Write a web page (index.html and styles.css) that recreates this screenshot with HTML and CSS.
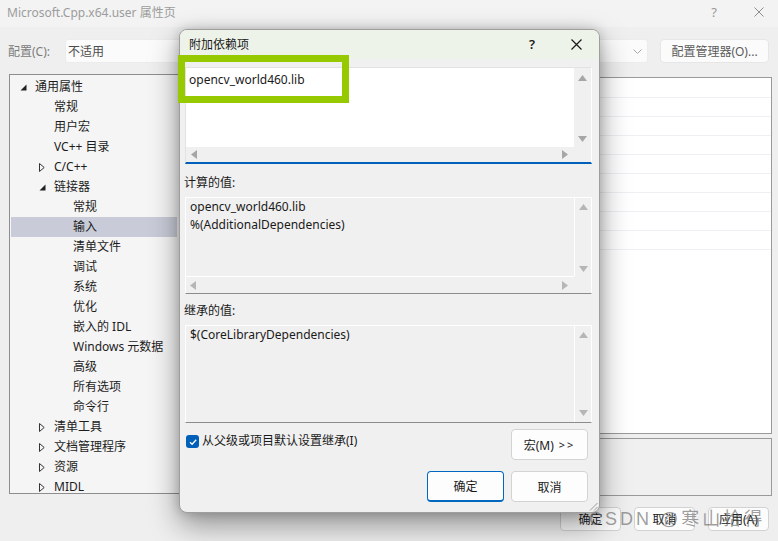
FILE: index.html
```html
<!DOCTYPE html>
<html>
<head>
<meta charset="utf-8">
<link rel="stylesheet" href="styles.css">
</head>
<body>
<div class="window">
  <div class="titlebar">
    <span class="title">Microsoft.Cpp.x64.user 属性页</span>
    <div class="caption-btns">
      <span class="cap help">?</span>
      <span class="cap"><svg width="10" height="10" viewBox="0 0 10 10"><path d="M0.5 0.5L9.5 9.5M9.5 0.5L0.5 9.5" stroke="#8c8c8c" stroke-width="1"/></svg></span>
    </div>
  </div>

  <div class="config-row">
    <span class="cfg-label">配置(C):</span>
    <div class="select">
      <span>不适用</span>
      <svg class="chev" width="9" height="5" viewBox="0 0 9 5"><path d="M0.5 0.5L4.5 4.5L8.5 0.5" fill="none" stroke="#a8a8a8" stroke-width="1"/></svg>
    </div>
    <div class="cfg-btn">配置管理器(O)...</div>
  </div>

  <div class="content">
    <div class="tree">
      <div class="item l0"><span class="arr"><svg width="7" height="7" viewBox="0 0 7 7"><polygon points="6.5,0.5 6.5,6.5 0.5,6.5" fill="#222"/></svg></span>通用属性</div>
      <div class="item l1"><span class="arr"></span>常规</div>
      <div class="item l1"><span class="arr"></span>用户宏</div>
      <div class="item l1"><span class="arr"></span>VC++ 目录</div>
      <div class="item l1"><span class="arr"><svg width="6" height="9" viewBox="0 0 6 9"><polygon points="0.5,0.5 5.2,4.5 0.5,8.5" fill="none" stroke="#333" stroke-width="1"/></svg></span>C/C++</div>
      <div class="item l1"><span class="arr"><svg width="7" height="7" viewBox="0 0 7 7"><polygon points="6.5,0.5 6.5,6.5 0.5,6.5" fill="#222"/></svg></span>链接器</div>
      <div class="item l2"><span class="arr"></span>常规</div>
      <div class="item l2 sel"><span class="arr"></span>输入</div>
      <div class="item l2"><span class="arr"></span>清单文件</div>
      <div class="item l2"><span class="arr"></span>调试</div>
      <div class="item l2"><span class="arr"></span>系统</div>
      <div class="item l2"><span class="arr"></span>优化</div>
      <div class="item l2"><span class="arr"></span>嵌入的 IDL</div>
      <div class="item l2"><span class="arr"></span>Windows 元数据</div>
      <div class="item l2"><span class="arr"></span>高级</div>
      <div class="item l2"><span class="arr"></span>所有选项</div>
      <div class="item l2"><span class="arr"></span>命令行</div>
      <div class="item l1"><span class="arr"><svg width="6" height="9" viewBox="0 0 6 9"><polygon points="0.5,0.5 5.2,4.5 0.5,8.5" fill="none" stroke="#333" stroke-width="1"/></svg></span>清单工具</div>
      <div class="item l1"><span class="arr"><svg width="6" height="9" viewBox="0 0 6 9"><polygon points="0.5,0.5 5.2,4.5 0.5,8.5" fill="none" stroke="#333" stroke-width="1"/></svg></span>文档管理程序</div>
      <div class="item l1"><span class="arr"><svg width="6" height="9" viewBox="0 0 6 9"><polygon points="0.5,0.5 5.2,4.5 0.5,8.5" fill="none" stroke="#333" stroke-width="1"/></svg></span>资源</div>
      <div class="item l1"><span class="arr"><svg width="6" height="9" viewBox="0 0 6 9"><polygon points="0.5,0.5 5.2,4.5 0.5,8.5" fill="none" stroke="#333" stroke-width="1"/></svg></span>MIDL</div>
    </div>
    <div class="rightcol">
      <div class="grid">
        <div class="row"></div><div class="row"></div><div class="row"></div>
        <div class="row"></div><div class="row"></div><div class="row"></div>
        <div class="row"></div><div class="row"></div><div class="row"></div>
      </div>
      <div class="desc"></div>
    </div>
  </div>

  <div class="footer">
    <div class="mbtn">确定</div>
    <div class="mbtn">取消</div>
    <div class="mbtn">应用(A)</div>
  </div>
</div>

<div class="dialog">
  <div class="dlg-title">
    <span class="dlg-name">附加依赖项</span>
    <span class="dlg-help">?</span>
    <span class="dlg-close"><svg width="11" height="11" viewBox="0 0 11 11"><path d="M0.5 0.5L10.5 10.5M10.5 0.5L0.5 10.5" stroke="#1a1a1a" stroke-width="1.2"/></svg></span>
  </div>
  <div class="dlg-body">
    <div class="edit">
      <div class="edit-text">opencv_world460.lib</div>
      <div class="vscroll">
        <svg width="9" height="6" viewBox="0 0 9 6"><polygon points="0,6 4.5,0 9,6" fill="#a6a6a6"/></svg>
        <svg width="9" height="6" viewBox="0 0 9 6"><polygon points="0,0 4.5,6 9,0" fill="#a6a6a6"/></svg>
      </div>
      <div class="hscroll">
        <svg width="6" height="9" viewBox="0 0 6 9"><polygon points="6,0 0,4.5 6,9" fill="#a6a6a6"/></svg>
        <svg width="6" height="9" viewBox="0 0 6 9"><polygon points="0,0 6,4.5 0,9" fill="#a6a6a6"/></svg>
      </div>
      <div class="corner"></div>
    </div>

    <div class="label">计算的值:</div>
    <div class="ro ro-h">
      <div class="ro-text">opencv_world460.lib<br>%(AdditionalDependencies)</div>
      <div class="vscroll ro-v">
        <svg width="9" height="6" viewBox="0 0 9 6"><polygon points="0,6 4.5,0 9,6" fill="#b6b6b6"/></svg>
        <svg width="9" height="6" viewBox="0 0 9 6"><polygon points="0,0 4.5,6 9,0" fill="#b6b6b6"/></svg>
      </div>
      <div class="hscroll ro-hs">
        <svg width="6" height="9" viewBox="0 0 6 9"><polygon points="6,0 0,4.5 6,9" fill="#b6b6b6"/></svg>
        <svg width="6" height="9" viewBox="0 0 6 9"><polygon points="0,0 6,4.5 0,9" fill="#b6b6b6"/></svg>
      </div>
      <div class="corner"></div>
    </div>

    <div class="label label2">继承的值:</div>
    <div class="ro ro-nh">
      <div class="ro-text">$(CoreLibraryDependencies)</div>
      <div class="vscroll ro-v ro-v2">
        <svg width="9" height="6" viewBox="0 0 9 6"><polygon points="0,6 4.5,0 9,6" fill="#b6b6b6"/></svg>
        <svg width="9" height="6" viewBox="0 0 9 6"><polygon points="0,0 4.5,6 9,0" fill="#b6b6b6"/></svg>
      </div>
    </div>

    <div class="check-row">
      <span class="checkbox"><svg width="10" height="10" viewBox="0 0 10 10"><path d="M2 5.2L4.1 7.3L8.2 2.8" fill="none" stroke="#fff" stroke-width="1.3"/></svg></span>
      <span class="check-label">从父级或项目默认设置继承(I)</span>
      <div class="dbtn macro">宏(M) <span class="gt">&gt;&gt;</span></div>
    </div>

    <div class="btn-row">
      <div class="dbtn primary">确定</div>
      <div class="dbtn">取消</div>
    </div>
  </div>
  <svg class="grip" width="9" height="9" viewBox="0 0 9 9"><path d="M8.5 1L1 8.5M8.5 5L5 8.5" stroke="#9a9a9a" stroke-width="1"/></svg>
</div>

<div class="highlight"></div>
<div class="watermark">CSDN @寒山拾得</div>
</body>
</html>
```

FILE: styles.css
```css
* { box-sizing: border-box; }
html, body { margin: 0; padding: 0; }
body {
  width: 778px;
  height: 541px;
  overflow: hidden;
  position: relative;
  background: #efefef;
  font-family: "Noto Sans", "Noto Sans CJK SC", sans-serif;
  font-size: 12px;
  color: #1a1a1a;
}

.window { display: flex; flex-direction: column; height: 541px; }

.titlebar {
  height: 27px;
  display: flex;
  align-items: center;
  background: #f3f3f3;
  padding-left: 7px;
  color: #9c9c9c;
}
.titlebar .title { flex: 1; line-height: 18px; padding-bottom: 2px; }
.caption-btns { display: flex; gap: 25px; padding-right: 9px; align-items: center; padding-bottom: 3px; }
.cap { width: 20px; display: flex; justify-content: center; align-items: center; color: #999; font-size: 13px; line-height: 14px; }

.config-row {
  display: flex;
  align-items: center;
  height: 24px;
  margin-top: 12px;
  padding-left: 8px;
  padding-right: 9px;
}
.cfg-label { width: 57px; color: #7c7c7c; }
.select {
  width: 583px;
  height: 24px;
  background: #fbfbfb;
  border: 1px solid #ececec;
  border-radius: 3px;
  display: flex;
  align-items: center;
  padding-left: 2px;
  color: #4c4c4c;
}
.select .chev { margin-left: auto; margin-right: 5px; }
.cfg-btn {
  margin-left: 12px;
  width: 109px;
  height: 24px;
  background: #fbfbfb;
  border: 1px solid #e6e6e6;
  border-radius: 4px;
  display: flex;
  align-items: center;
  justify-content: center;
  color: #5c5c5c;
}

.content {
  display: flex;
  align-items: flex-start;
  margin-top: 11px;
  padding-left: 9px;
  padding-right: 6px;
}
.tree {
  width: 171px;
  height: 420px;
  border: 1px solid #8e8e8e;
  background: #f5f5f5;
  padding-top: 2px;
}
.item {
  height: 20px;
  display: flex;
  align-items: center;
  margin: 0 2px 0 1px;
  color: #1c1c1c;
  white-space: nowrap;
  line-height: 20px;
}
.item.l0 { padding-left: 9px; }
.item.l1 { padding-left: 28px; }
.item.l2 { padding-left: 47px; }
.item.sel { background: #c9ccd8; }
.arr { width: 15px; height: 20px; display: flex; align-items: center; flex-shrink: 0; }

.rightcol { flex: 1; margin-left: 16px; display: flex; flex-direction: column; }
.grid {
  margin-top: 3px;
  height: 357px;
  border: 1px solid #9a9a9a;
  background: #ffffff;
  padding-top: 1px;
}
.row { height: 19px; border-bottom: 1px solid #eef0f4; }
.desc {
  margin-top: 4px;
  height: 58px;
  border: 1px solid #9a9a9a;
  background: #f0f0f0;
}

.footer {
  display: flex;
  justify-content: flex-end;
  gap: 13px;
  padding-right: 9px;
  margin-top: 11px;
}
.mbtn {
  width: 61px;
  height: 24px;
  background: #fcfcfc;
  border: 1px solid #d2d2d2;
  border-radius: 4px;
  display: flex;
  align-items: center;
  justify-content: center;
  color: #1a1a1a;
}

/* Dialog */
.dialog {
  position: absolute;
  left: 179px;
  top: 29px;
  width: 421px;
  height: 484px;
  background: #f0f0f0;
  border: 1px solid #9e9e9e;
  border-radius: 8px;
  box-shadow: 0 12px 30px rgba(0, 0, 0, 0.4), 0 0 12px rgba(0, 0, 0, 0.18);
  display: flex;
  flex-direction: column;
  overflow: hidden;
}
.dlg-title {
  height: 29px;
  background: #eef3e9;
  display: flex;
  align-items: center;
  padding-left: 9px;
  padding-right: 17px;
  padding-bottom: 1px;
}
.dlg-name { flex: 1; color: #1a1a1a; }
.dlg-help { width: 10px; text-align: center; font-size: 13px; font-weight: 600; color: #1a1a1a; }
.dlg-close { margin-left: 34px; display: flex; align-items: center; }

.dlg-body {
  display: flex;
  flex-direction: column;
  padding: 8px 7px 0 5px;
}

.edit {
  display: grid;
  grid-template-columns: 1fr 17px;
  grid-template-rows: 1fr 15px;
  height: 97px;
  border: 1px solid #e2e2e2;
  border-right-color: #ffffff;
  border-bottom: 2px solid #005fb8;
  background: #f0f0f0;
}
.edit-text {
  background: #ffffff;
  padding: 3px 3px;
  line-height: 18px;
  color: #1a1a1a;
}
.vscroll {
  display: flex;
  flex-direction: column;
  justify-content: space-between;
  align-items: center;
  padding: 7px 0 5px;
  background: #f0f0f0;
}
.hscroll {
  display: flex;
  justify-content: space-between;
  align-items: center;
  padding: 0 6px 0 5px;
  background: #f0f0f0;
}
.corner { background: #f0f0f0; }

.label { margin-top: 10px; margin-bottom: 5px; margin-left: -1px; line-height: 18px; height: 18px; color: #1a1a1a; }
.label2 { margin-top: 8px; }

.ro {
  display: grid;
  grid-template-columns: 1fr 17px;
  border: 1px solid #ffffff;
  border-bottom: 1px solid #8c8c8c;
  background: #f0f0f0;
}
.ro-h { height: 97px; grid-template-rows: 1fr 17px; }
.ro-nh { height: 98px; grid-template-rows: 1fr; }
.ro-text { padding: 0 4px; line-height: 18px; color: #1a1a1a; }
.ro-v { border-left: 1px solid #ffffff; padding: 6px 0 4px; }
.ro-v2 { padding: 6px 0 6px; }
.ro-hs { border-top: 1px solid #ffffff; padding: 0 6px 0 4px; }

.check-row {
  display: flex;
  align-items: flex-start;
  margin-top: 6px;
  height: 31px;
}
.checkbox {
  width: 13px;
  height: 13px;
  margin-top: 6px;
  margin-left: 1px;
  background: #005fb8;
  border-radius: 3px;
  display: flex;
  align-items: center;
  justify-content: center;
}
.check-label { margin-left: 3px; margin-top: 3px; line-height: 18px; color: #1a1a1a; }
.dbtn {
  width: 77px;
  height: 31px;
  background: #fdfdfd;
  border: 1px solid #d3d3d3;
  border-radius: 4px;
  display: flex;
  align-items: center;
  justify-content: center;
  color: #1a1a1a;
}
.macro { margin-left: auto; margin-right: 4px; }
.gt { letter-spacing: 2px; margin-left: 5px; font-size: 11px; }

.btn-row {
  display: flex;
  justify-content: flex-end;
  gap: 7px;
  margin-top: 11px;
  padding-right: 4px;
}
.dbtn.primary { border: 1px solid #0067c0; border-bottom-width: 2px; }

.grip { position: absolute; right: 1px; bottom: 1px; }

.highlight {
  position: absolute;
  left: 178px;
  top: 55px;
  width: 171px;
  height: 48px;
  border: 7px solid #97c900;
}

.watermark {
  position: absolute;
  left: 589px;
  top: 507px;
  font-family: "Liberation Sans", "Noto Sans CJK SC", sans-serif;
  font-size: 18px;
  line-height: 24px;
  letter-spacing: 3px;
  color: rgba(95, 95, 95, 0.6);
  white-space: nowrap;
}
```
